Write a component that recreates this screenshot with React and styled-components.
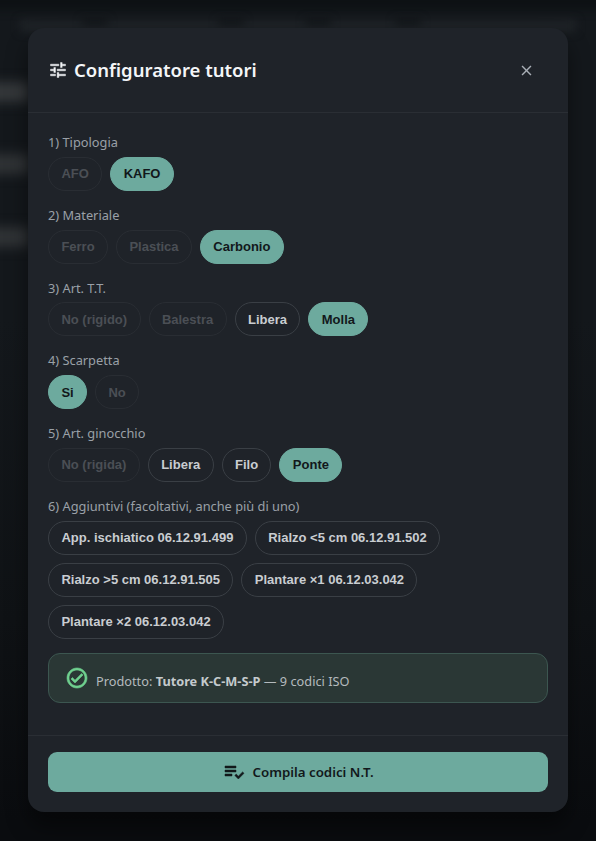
import React from 'react';
import styled, { createGlobalStyle } from 'styled-components';
import { MdTune, MdClose, MdPlaylistAddCheck, MdOutlineCheckCircle } from 'react-icons/md';

const Global = createGlobalStyle`
  html, body { margin: 0; padding: 0; background: #0b0d10; }
  * { box-sizing: border-box; }
  svg path[fill="none"] { stroke: none; }
`;

const Page = styled.div`
  position: relative;
  width: 596px;
  height: 841px;
  overflow: hidden;
  background: linear-gradient(#14181c 0, #14181c 320px, #0f1215 620px, #0a0c0f 820px);
  padding: 28px;
  font-family: "Noto Sans", "Open Sans", sans-serif;
`;

// what is left of the page behind the modal
const Blur = styled.div`
  position: absolute;
  left: ${(p) => p.$x}px;
  top: ${(p) => p.$y}px;
  width: ${(p) => p.$w}px;
  height: ${(p) => p.$h}px;
  background: ${(p) => p.$c};
  filter: blur(${(p) => p.$b || 6}px);
`;

const Modal = styled.div`
  position: relative;
  width: 540px;
  height: 784px;
  background: #1f2329;
  border-radius: 16px;
  box-shadow: 0 14px 22px rgba(0, 0, 0, 0.45);
  display: flex;
  flex-direction: column;
`;

const Header = styled.div`
  height: 85px;
  flex: none;
  display: flex;
  align-items: center;
  justify-content: space-between;
  padding: 0 33px 0 20px;
  border-bottom: 1px solid #2a2e34;
`;

const Title = styled.h2`
  margin: 0;
  padding-bottom: 2px;
  display: flex;
  align-items: center;
  gap: 6px;
  font-size: 18.5px;
  font-weight: 600;
  color: #f4f6f8;
  svg { stroke: currentColor; stroke-width: 0.5; margin-top: 1px; }
`;

const CloseBtn = styled.div`
  display: flex;
  color: #a9afb6;
`;

const Body = styled.div`
  flex: 1;
  padding: 20px 20px 0;
`;

const Section = styled.div`
  margin-bottom: 15px;
`;

const Label = styled.div`
  font-size: 12.8px;
  line-height: 18px;
  height: 23.8px;
  color: #9aa0a7;
`;

const Pills = styled.div`
  display: flex;
  flex-wrap: wrap;
  gap: 8px;
`;

const Pill = styled.div`
  height: 34px;
  padding: 0 12.4px;
  border-radius: 17px;
  display: flex;
  align-items: center;
  font-family: "Liberation Sans", Arial, sans-serif;
  font-size: 13px;
  font-weight: 700;
  border: 1.5px solid ${(p) => (p.$kind === 'on' ? '#6daa9e' : p.$kind === 'off' ? '#292d33' : '#3a3f45')};
  background: ${(p) => (p.$kind === 'on' ? '#6daa9e' : 'transparent')};
  color: ${(p) => (p.$kind === 'on' ? '#12181b' : p.$kind === 'off' ? '#4b4f55' : '#c9cdd1')};
`;

const Result = styled.div`
  height: 50px;
  margin-top: -1px;
  display: flex;
  align-items: center;
  gap: 7px;
  padding: 0 16px;
  border-radius: 12px;
  background: #2a3735;
  border: 1px solid #3c5650;
  font-size: 12.75px;
  color: #b4babd;
  b { font-weight: 700; color: #c4cacd; }
  svg { color: #6fd08f; stroke: currentColor; stroke-width: 0.6; }
  span { margin-top: 7px; }
`;

const Footer = styled.div`
  height: 77px;
  flex: none;
  padding: 16px 20px 0;
  border-top: 1px solid #2a2e34;
`;

const Submit = styled.div`
  height: 40px;
  border-radius: 9px;
  background: #6daa9e;
  color: #12181b;
  display: flex;
  align-items: center;
  justify-content: center;
  gap: 6px;
  font-size: 13.3px;
  font-weight: 600;
  svg { stroke: currentColor; stroke-width: 0.5; }
`;

const sections = [
  ['1) Tipologia', [['AFO', 'off'], ['KAFO', 'on']]],
  ['2) Materiale', [['Ferro', 'off'], ['Plastica', 'off'], ['Carbonio', 'on']]],
  ['3) Art. T.T.', [['No (rigido)', 'off'], ['Balestra', 'off'], ['Libera', ''], ['Molla', 'on']]],
  ['4) Scarpetta', [['Si', 'on'], ['No', 'off']]],
  ['5) Art. ginocchio', [['No (rigida)', 'off'], ['Libera', ''], ['Filo', ''], ['Ponte', 'on']]],
  ['6) Aggiuntivi (facoltativi, anche più di uno)', [
    ['App. ischiatico 06.12.91.499', ''],
    ['Rialzo <5 cm 06.12.91.502', ''],
    ['Rialzo >5 cm 06.12.91.505', ''],
    ['Plantare ×1 06.12.03.042', ''],
    ['Plantare ×2 06.12.03.042', ''],
  ]],
];

const blurs = [
  [-20, 82, 50, 20, '#35383b'],
  [-20, 154, 50, 20, '#303336'],
  [-20, 227, 50, 20, '#303336'],
  [-20, -20, 640, 30, '#0d1114', 5],
  [20, 20, 556, 12, '#1f2327', 4],
  [82, 19, 26, 6, '#0f1316', 4],
  [218, 19, 26, 6, '#0f1316', 4],
  [305, 19, 26, 6, '#0f1316', 4],
  [395, 19, 26, 6, '#0f1316', 4],
];

export default function App() {
  return (
    <>
      <Global />
      <Page>
        {blurs.map(([x, y, w, h, c, b], i) => (
          <Blur key={i} $x={x} $y={y} $w={w} $h={h} $c={c} $b={b} />
        ))}
        <Modal>
          <Header>
            <Title><MdTune size={20} />Configuratore tutori</Title>
            <CloseBtn><MdClose size={17} /></CloseBtn>
          </Header>
          <Body>
            {sections.map(([label, pills]) => (
              <Section key={label}>
                <Label>{label}</Label>
                <Pills>
                  {pills.map(([text, kind]) => (
                    <Pill key={text} $kind={kind}>{text}</Pill>
                  ))}
                </Pills>
              </Section>
            ))}
            <Result>
              <MdOutlineCheckCircle size={24} />
              <span>Prodotto: <b>Tutore K-C-M-S-P</b> — 9 codici ISO</span>
            </Result>
          </Body>
          <Footer>
            <Submit><MdPlaylistAddCheck size={24} />Compila codici N.T.</Submit>
          </Footer>
        </Modal>
      </Page>
    </>
  );
}
